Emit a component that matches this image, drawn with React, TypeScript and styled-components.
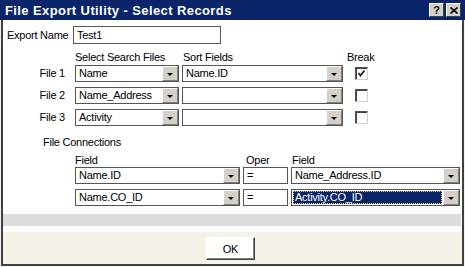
import { Fragment } from 'react';
import styled, { createGlobalStyle } from 'styled-components';

const GlobalStyle = createGlobalStyle`
  html, body {
    margin: 0;
    padding: 0;
    background: #fff;
  }
`;

const Window = styled.div`
  width: 465px;
  height: 267px;
  display: flex;
  flex-direction: column;
  background: #f2f2f2;
  font-family: 'Liberation Sans', Arial, sans-serif;
  font-size: 11px;
  letter-spacing: -0.25px;
  color: #000;
`;

const TitleBar = styled.div`
  flex: none;
  height: 20px;
  background: #0a246a;
  display: flex;
  align-items: center;
  justify-content: space-between;
  padding: 0 4px 0 5px;
`;

const Title = styled.span`
  color: #fff;
  font-weight: 700;
  font-size: 13px;
  letter-spacing: 0.4px;
`;

const TitleButtons = styled.div`
  display: flex;
  gap: 2px;
`;

const TitleButton = styled.div`
  width: 15px;
  height: 14px;
  box-sizing: border-box;
  background: #d4d0c8;
  border: 1px solid;
  border-color: #fff #404040 #404040 #fff;
  display: flex;
  align-items: center;
  justify-content: center;
  font-weight: 700;
  font-size: 11px;
  letter-spacing: 0;
`;

const Frame = styled.div`
  flex: 1;
  display: flex;
  flex-direction: column;
  margin: 0 1px 1px;
  border: 2px solid #404040;
  border-top: none;
  background: #fff;
`;

const ExportRow = styled.div`
  display: flex;
  align-items: center;
  height: 18px;
  margin-top: 6px;
  padding-left: 4px;
`;

const ExportLabel = styled.span`
  width: 66px;
`;

const TextBox = styled.div<{ $width: number }>`
  width: ${(p) => p.$width}px;
  height: 100%;
  box-sizing: border-box;
  border: 1px solid #555;
  padding: 0 3px;
  line-height: 16px;
`;

const fileColumns = '69px 104px 161px 1fr';
const connColumns = '69px 165px 45px 169px';

const HeaderGrid = styled.div<{ $columns: string; $top: number }>`
  display: grid;
  grid-template-columns: ${(p) => p.$columns};
  column-gap: 3px;
  height: 12px;
  line-height: 12px;
  margin-top: ${(p) => p.$top}px;
`;

const Header = styled.span<{ $shift?: number }>`
  padding-left: ${(p) => p.$shift ?? 0}px;
  white-space: nowrap;
`;

const RowGrid = styled.div<{ $columns: string; $top: number }>`
  display: grid;
  grid-template-columns: ${(p) => p.$columns};
  grid-auto-rows: 17px;
  column-gap: 3px;
  row-gap: 5px;
  margin-top: ${(p) => p.$top}px;
`;

const RowLabel = styled.span`
  text-align: right;
  padding-right: 7px;
  line-height: 17px;
`;

const Combo = styled.div`
  display: flex;
  height: 17px;
  box-sizing: border-box;
  border: 1px solid #555;
  background: #fff;
`;

const ComboValue = styled.div<{ $selected?: boolean }>`
  flex: 1;
  min-width: 0;
  padding: 0 2px;
  margin: 1px;
  line-height: 13px;
  white-space: nowrap;
  overflow: hidden;
  background: ${(p) => (p.$selected ? '#0a246a' : 'transparent')};
  color: ${(p) => (p.$selected ? '#fff' : '#000')};
  outline: ${(p) => (p.$selected ? '1px dotted #e8d870' : 'none')};
  outline-offset: -1px;
`;

const DropButton = styled.div`
  flex: none;
  width: 16px;
  box-sizing: border-box;
  background: #d4d0c8;
  border: 1px solid;
  border-color: #fff #808080 #808080 #fff;
  display: flex;
  align-items: center;
  justify-content: center;
`;

const Arrow = styled.span`
  width: 0;
  height: 0;
  border-left: 3px solid transparent;
  border-right: 3px solid transparent;
  border-top: 3px solid #000;
  margin-top: 1px;
`;

const BreakCell = styled.div`
  display: flex;
  align-items: center;
  padding-left: 9px;
`;

const CheckBox = styled.div`
  width: 13px;
  height: 13px;
  box-sizing: border-box;
  background: #fff;
  border: 1px solid;
  border-color: #555 #d4d0c8 #d4d0c8 #555;
  box-shadow: inset 1px 1px 0 #404040;
  display: flex;
  align-items: center;
  justify-content: center;
`;

const SectionLabel = styled.div`
  margin-top: 10px;
  padding-left: 40px;
  height: 12px;
  line-height: 12px;
`;

const OperBox = styled.div`
  height: 17px;
  box-sizing: border-box;
  border: 1px solid #555;
  padding-left: 3px;
  line-height: 15px;
`;

const GrayBar = styled.div`
  height: 12px;
  margin: 8px 1px 0 0;
  background: #dcdcdc;
`;

const Footer = styled.div`
  flex: 1;
  margin-top: 6px;
  background: #f5f1e6;
  display: flex;
  justify-content: center;
  align-items: flex-start;
  padding-top: 5px;
`;

const OkButton = styled.div`
  width: 49px;
  height: 23px;
  box-sizing: border-box;
  background: #fff;
  border: 1px solid;
  border-color: #fff #404040 #404040 #fff;
  box-shadow: inset -1px -1px 0 #808080;
  display: flex;
  align-items: center;
  justify-content: center;
  margin-right: 4px;
`;

function ComboBox({ value, selected }: { value: string; selected?: boolean }) {
  return (
    <Combo>
      <ComboValue $selected={selected}>{value}</ComboValue>
      <DropButton>
        <Arrow />
      </DropButton>
    </Combo>
  );
}

const files = [
  { label: 'File 1', file: 'Name', sort: 'Name.ID', brk: true },
  { label: 'File 2', file: 'Name_Address', sort: '', brk: false },
  { label: 'File 3', file: 'Activity', sort: '', brk: false },
];

const connections = [
  { left: 'Name.ID', oper: '=', right: 'Name_Address.ID', selected: false },
  { left: 'Name.CO_ID', oper: '=', right: 'Activity.CO_ID', selected: true },
];

export default function App() {
  return (
    <Window>
      <GlobalStyle />
      <TitleBar>
        <Title>File Export Utility - Select Records</Title>
        <TitleButtons>
          <TitleButton>?</TitleButton>
          <TitleButton>
            <svg width="8" height="7" viewBox="0 0 8 7">
              <path d="M0.5 0.5 L7.5 6.5 M7.5 0.5 L0.5 6.5" stroke="#000" strokeWidth="1.6" />
            </svg>
          </TitleButton>
        </TitleButtons>
      </TitleBar>
      <Frame>
        <ExportRow>
          <ExportLabel>Export Name</ExportLabel>
          <TextBox $width={148}>Test1</TextBox>
        </ExportRow>

        <HeaderGrid $columns={fileColumns} $top={7}>
          <span />
          <Header $shift={-2}>Select Search Files</Header>
          <Header $shift={1}>Sort Fields</Header>
          <Header $shift={1}>Break</Header>
        </HeaderGrid>
        <RowGrid $columns={fileColumns} $top={2}>
          {files.map((f) => (
            <Fragment key={f.label}>
              <RowLabel>{f.label}</RowLabel>
              <ComboBox value={f.file} />
              <ComboBox value={f.sort} />
              <BreakCell>
                <CheckBox>
                  {f.brk && (
                    <svg width="9" height="9" viewBox="0 0 9 9">
                      <polyline points="1.5,4 3.5,6.5 7.5,1.5" fill="none" stroke="#222" strokeWidth="1.8" />
                    </svg>
                  )}
                </CheckBox>
              </BreakCell>
            </Fragment>
          ))}
        </RowGrid>

        <SectionLabel>File Connections</SectionLabel>
        <HeaderGrid $columns={connColumns} $top={6}>
          <span />
          <Header>Field</Header>
          <Header $shift={3}>Oper</Header>
          <Header $shift={1}>Field</Header>
        </HeaderGrid>
        <RowGrid $columns={connColumns} $top={1}>
          {connections.map((c) => (
            <Fragment key={c.left}>
              <span />
              <ComboBox value={c.left} />
              <OperBox>{c.oper}</OperBox>
              <ComboBox value={c.right} selected={c.selected} />
            </Fragment>
          ))}
        </RowGrid>

        <GrayBar />
        <Footer>
          <OkButton>OK</OkButton>
        </Footer>
      </Frame>
    </Window>
  );
}
